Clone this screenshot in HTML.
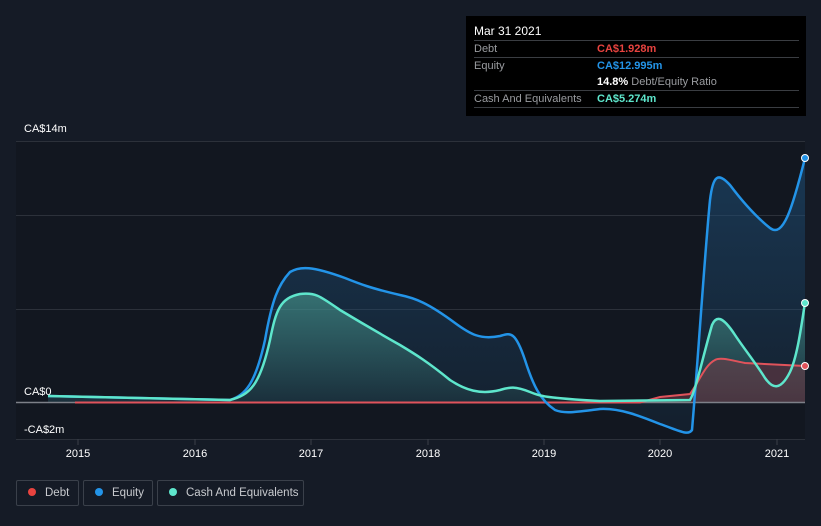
<!DOCTYPE html>
<html><head><style>
body{margin:0;background:#151b26;width:821px;height:526px;overflow:hidden;font-family:"Liberation Sans",sans-serif;position:relative}
.tt{position:absolute;left:466px;top:16px;width:340px;height:100px;background:#000;color:#fff;font-size:11px}
.row{position:absolute;left:8px;width:325px;border-top:1px solid #3a3d42;height:16px;line-height:16px}
.lab{color:#9a9ca0}
.v{position:absolute;left:123px}
.leg{position:absolute;top:480px;height:26px;border:1px solid #3a404a;border-radius:2px;color:#c8cace;font-size:11.5px;line-height:24px;box-sizing:border-box;white-space:nowrap}
.dot{display:inline-block;width:8px;height:8px;border-radius:50%;margin:0 9px 0 11px;vertical-align:-0px}
</style></head><body>
<svg width="821" height="526" style="position:absolute;left:0;top:0">
<defs>
<linearGradient id="ge" x1="0" y1="0" x2="0" y2="1"><stop offset="0" stop-color="#1e4d75" stop-opacity=".6"/><stop offset="1" stop-color="#1e4d75" stop-opacity=".15"/></linearGradient>
<linearGradient id="gc" x1="0" y1="0" x2="0" y2="1"><stop offset="0" stop-color="#4fa99a" stop-opacity=".55"/><stop offset="1" stop-color="#4fa99a" stop-opacity=".1"/></linearGradient>
</defs>
<rect x="16" y="141" width="789" height="298" fill="#121720"/>
<g stroke="#2c313a" stroke-width="1">
<line x1="16" y1="141.5" x2="805" y2="141.5"/><line x1="16" y1="215.5" x2="805" y2="215.5"/><line x1="16" y1="309.5" x2="805" y2="309.5"/><line x1="16" y1="439.5" x2="805" y2="439.5"/>
</g>
<g stroke="#3a3f48"><line x1="78" y1="439" x2="78" y2="445"/><line x1="195" y1="439" x2="195" y2="445"/><line x1="311" y1="439" x2="311" y2="445"/><line x1="428" y1="439" x2="428" y2="445"/><line x1="544" y1="439" x2="544" y2="445"/><line x1="660" y1="439" x2="660" y2="445"/><line x1="777" y1="439" x2="777" y2="445"/></g>
<path d="M48,396 L230,400 C245,395 255,385 265,340 C272,300 278,285 290,272 C300,266 312,266 345,278 C360,284 370,288 400,295 C415,298 428,303 455,323 C470,334 480,340 500,336 C510,333 515,330 525,360 C533,385 540,400 555,410 C565,414 575,412 600,409 C620,408 640,416 660,424 C680,431 688,436 692,430 C698,360 705,250 710,200 C713,175 718,172 730,185 C745,205 760,220 770,228 C783,238 792,210 805,158 L805,402 L48,402 Z" fill="url(#ge)"/>
<path d="M48,396 L230,400 C250,395 260,385 270,340 C276,310 280,298 300,294 C315,292 320,296 340,310 C360,322 370,328 400,345 C415,354 428,362 450,380 C465,390 480,395 500,390 C510,387 515,386 530,392 C540,396 545,398 600,401 L690,400 C696,390 702,360 712,325 C716,316 722,315 735,335 C745,350 755,362 765,378 C772,388 780,392 790,372 C798,355 802,320 805,303 L805,402 L48,402 Z" fill="url(#gc)"/>
<path d="M640,402 L660,397 L690,394 C700,380 705,365 715,360 C720,357 730,360 745,363 L805,366 L805,402 Z" fill="#7a3e48" fill-opacity=".5"/>
<line x1="16" y1="402.5" x2="805" y2="402.5" stroke="#7d8088" stroke-width="1.5"/>
<path d="M75,402.5 L640,402.5 L660,397 L690,394 C700,380 705,365 715,360 C720,357 730,360 745,363 L805,366" fill="none" stroke="#e0535b" stroke-width="2"/>
<path d="M48,396 L230,400 C245,395 255,385 265,340 C272,300 278,285 290,272 C300,266 312,266 345,278 C360,284 370,288 400,295 C415,298 428,303 455,323 C470,334 480,340 500,336 C510,333 515,330 525,360 C533,385 540,400 555,410 C565,414 575,412 600,409 C620,408 640,416 660,424 C680,431 688,436 692,430 C698,360 705,250 710,200 C713,175 718,172 730,185 C745,205 760,220 770,228 C783,238 792,210 805,158" fill="none" stroke="#2394e8" stroke-width="2.5"/>
<path d="M48,396 L230,400 C250,395 260,385 270,340 C276,310 280,298 300,294 C315,292 320,296 340,310 C360,322 370,328 400,345 C415,354 428,362 450,380 C465,390 480,395 500,390 C510,387 515,386 530,392 C540,396 545,398 600,401 L690,400 C696,390 702,360 712,325 C716,316 722,315 735,335 C745,350 755,362 765,378 C772,388 780,392 790,372 C798,355 802,320 805,303" fill="none" stroke="#5ee6cc" stroke-width="2.5"/>
<circle cx="805" cy="158" r="3.5" fill="#2394e8" stroke="#fff" stroke-width="1"/>
<circle cx="805" cy="303" r="3.5" fill="#5ee6cc" stroke="#fff" stroke-width="1"/>
<circle cx="805" cy="366" r="3.5" fill="#e0535b" stroke="#fff" stroke-width="1"/>
<g fill="#fff" font-size="11" font-family="Liberation Sans,sans-serif">
<text x="24" y="132">CA$14m</text><text x="24" y="395">CA$0</text><text x="24" y="433">-CA$2m</text>
<g text-anchor="middle"><text x="78" y="457">2015</text><text x="195" y="457">2016</text><text x="311" y="457">2017</text><text x="428" y="457">2018</text><text x="544" y="457">2019</text><text x="660" y="457">2020</text><text x="777" y="457">2021</text></g>
</g>
</svg>
<div class="tt">
<div style="position:absolute;left:8px;top:8px;font-size:12px">Mar 31 2021</div>
<div class="row" style="top:24px"><span class="lab">Debt</span><span class="v" style="color:#e8433f;font-weight:bold">CA$1.928m</span></div>
<div class="row" style="top:41px;height:33px"><span class="lab">Equity</span><span class="v" style="color:#2394e8;font-weight:bold">CA$12.995m</span><div style="position:absolute;left:123px;top:16px"><b>14.8%</b> <span class="lab">Debt/Equity Ratio</span></div></div>
<div class="row" style="top:74px;border-bottom:1px solid #3a3d42"><span class="lab">Cash And Equivalents</span><span class="v" style="color:#5ee6cc;font-weight:bold">CA$5.274m</span></div>
</div>
<div class="leg" style="left:16px;width:63px"><span class="dot" style="background:#e8433f"></span>Debt</div>
<div class="leg" style="left:83px;width:70px"><span class="dot" style="background:#2394e8"></span>Equity</div>
<div class="leg" style="left:157px;width:147px"><span class="dot" style="background:#5ee6cc"></span>Cash And Equivalents</div>
</body></html>
